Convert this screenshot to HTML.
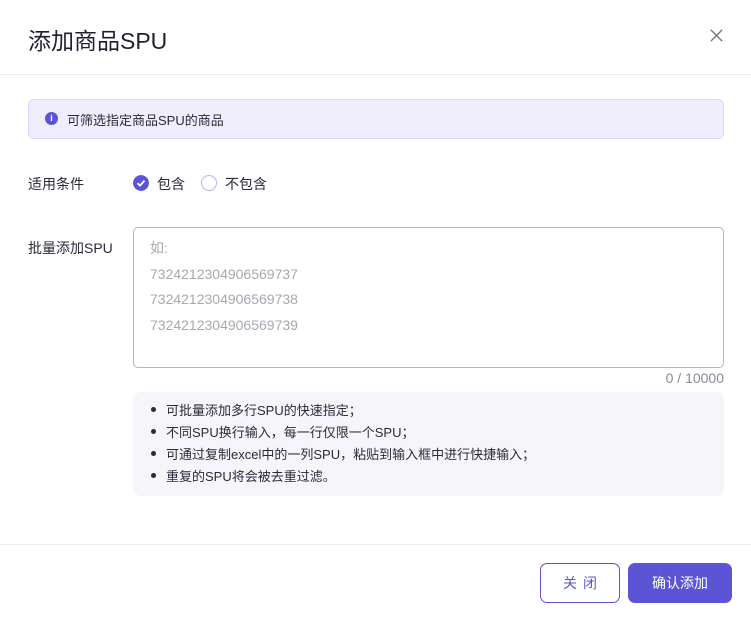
<!DOCTYPE html>
<html><head><meta charset="utf-8"><style>
*{box-sizing:border-box;margin:0;padding:0}
body{width:751px;height:618px;background:#fff;font-family:"Liberation Sans","Noto Sans CJK SC",sans-serif;color:#1f1f2e;position:relative;overflow:hidden}
.title{position:absolute;left:28px;top:22px;font-size:23px;color:#1f1f2e}
.close{position:absolute;left:709px;top:28px}
.hr1{position:absolute;left:0;right:0;top:74px;border-top:1px solid #ebebef}
.alert{position:absolute;left:28px;top:99px;width:696px;height:40px;background:#f0edfd;border:1px solid #ddd6f8;border-radius:6px;font-size:13px;color:#2a2a3a;padding:10px 0 0 38px}
.alert .i{position:absolute;left:16px;top:12px;width:13px;height:13px;border-radius:50%;background:#5b55d6;color:#fff;font-size:9px;text-align:center;line-height:13px;font-weight:bold}
.lbl{position:absolute;left:28px;font-size:14px;color:#2a2a3a}
.radio{position:absolute;top:175px;width:16px;height:16px;border-radius:50%}
.ta{position:absolute;left:133px;top:227px;width:591px;height:141px;border:1px solid #b3adef;border-radius:5px;padding:8px 16px;font-size:14px;color:#a8a8b2;line-height:25.5px}
.cnt{position:absolute;right:27px;top:370px;font-size:14px;color:#8a8a96}
.tips{position:absolute;left:133px;top:392px;width:591px;height:104px;background:#f5f5fa;border-radius:8px;padding:8px 0 0 18px;font-size:13px;color:#2a2a3a;line-height:22px}
.tips div:before{content:"";display:inline-block;width:5px;height:5px;border-radius:50%;background:#2a2a3a;margin-right:10px;vertical-align:middle;position:relative;top:-2px}
.hr2{position:absolute;left:0;right:0;top:544px;border-top:1px solid #ebebef}
.b1{position:absolute;left:540px;top:563px;width:80px;height:40px;border:1px solid #5b55d6;border-radius:7px;color:#5b55d6;font-size:14px;text-align:center;line-height:38px;letter-spacing:6px;padding-left:6px}
.b2{position:absolute;left:628px;top:563px;width:104px;height:40px;background:#5b55d6;border-radius:7px;color:#fff;font-size:14px;text-align:center;line-height:40px}
</style></head><body>
<div class="title">添加商品SPU</div>
<svg class="close" width="15" height="15" viewBox="0 0 16 16"><path d="M2 2L14 14M14 2L2 14" stroke="#777" stroke-width="1.5"/></svg>
<div class="hr1"></div>
<div class="alert"><span class="i">i</span>可筛选指定商品SPU的商品</div>
<div class="lbl" style="top:174px">适用条件</div>
<svg class="radio" style="left:133px" viewBox="0 0 16 16"><circle cx="8" cy="8" r="8" fill="#5b55d6"/><path d="M4.5 8.2L7 10.6L11.5 5.6" stroke="#fff" stroke-width="1.8" fill="none"/></svg>
<div class="lbl" style="top:174px;left:157px">包含</div>
<div class="radio" style="left:201px;border:1px solid #b6b0ee"></div>
<div class="lbl" style="top:174px;left:225px">不包含</div>
<div class="lbl" style="top:238px">批量添加SPU</div>
<div class="ta">如:<br>7324212304906569737<br>7324212304906569738<br>7324212304906569739</div>
<div class="cnt">0 / 10000</div>
<div class="tips"><div>可批量添加多行SPU的快速指定；</div><div>不同SPU换行输入，每一行仅限一个SPU；</div><div>可通过复制excel中的一列SPU，粘贴到输入框中进行快捷输入；</div><div>重复的SPU将会被去重过滤。</div></div>
<div class="hr2"></div>
<div class="b1">关闭</div>
<div class="b2">确认添加</div>
</body></html>
